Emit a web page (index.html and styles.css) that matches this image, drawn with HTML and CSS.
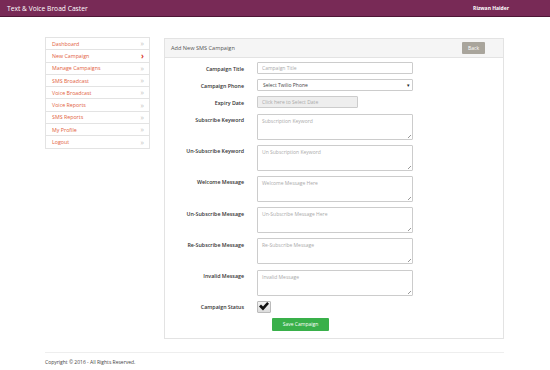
FILE: index.html
```html
<!DOCTYPE html>
<html lang="en">

<head>
    <meta charset="UTF-8">
    <meta name="viewport" content="width=device-width, initial-scale=1.0">
    <title>Text &amp; Voice Broad Caster</title>
    <link rel="stylesheet" href="styles.css">
</head>

<body>
    <div class="topbar">
        <span class="brand">Text &amp; Voice Broad Caster</span>
        <span class="user">Rizwan Haider</span>
    </div>

    <div class="wrap">
        <div class="layout">
            <ul class="sidenav">
                <li><a href="#">Dashboard</a><span class="arrow">&raquo;</span></li>
                <li class="active"><a href="#">New Campaign</a><span class="arrow">&rsaquo;</span></li>
                <li><a href="#">Manage Campaigns</a><span class="arrow">&raquo;</span></li>
                <li><a href="#">SMS Broadcast</a><span class="arrow">&raquo;</span></li>
                <li><a href="#">Voice Broadcast</a><span class="arrow">&raquo;</span></li>
                <li><a href="#">Voice Reports</a><span class="arrow">&raquo;</span></li>
                <li><a href="#">SMS Reports</a><span class="arrow">&raquo;</span></li>
                <li><a href="#">My Profile</a><span class="arrow">&raquo;</span></li>
                <li><a href="#">Logout</a><span class="arrow">&raquo;</span></li>
            </ul>

            <div class="panel">
                <div class="panel-heading">
                    <span>Add New SMS Campaign</span>
                    <button class="btn-back">Back</button>
                </div>
                <form class="panel-body">
                    <div class="row">
                        <label>Campaign Title</label>
                        <input type="text" class="field" placeholder="Campaign Title">
                    </div>
                    <div class="row">
                        <label>Campaign Phone</label>
                        <div class="field select">Select Twilio Phone<span class="caret">&#9662;</span></div>
                    </div>
                    <div class="row">
                        <label>Expiry Date</label>
                        <input type="text" class="field date" placeholder="Click here to Select Date" readonly>
                    </div>
                    <div class="row">
                        <label>Subscribe Keyword</label>
                        <textarea class="field area" placeholder="Subscription Keyword"></textarea>
                    </div>
                    <div class="row">
                        <label>Un-Subscribe Keyword</label>
                        <textarea class="field area" placeholder="Un Subscription Keyword"></textarea>
                    </div>
                    <div class="row">
                        <label>Welcome Message</label>
                        <textarea class="field area" placeholder="Welcome Message Here"></textarea>
                    </div>
                    <div class="row">
                        <label>Un-Subscribe Message</label>
                        <textarea class="field area" placeholder="Un-Subscribe Message Here"></textarea>
                    </div>
                    <div class="row">
                        <label>Re-Subscribe Message</label>
                        <textarea class="field area" placeholder="Re-Subscribe Message"></textarea>
                    </div>
                    <div class="row">
                        <label>Invalid Message</label>
                        <textarea class="field area" placeholder="Invalid Message"></textarea>
                    </div>
                    <div class="row">
                        <label>Campaign Status</label>
                        <span class="check">
                            <svg width="10" height="9" viewBox="0 0 10 9">
                                <path d="M0 4.4 L2 2.6 L4 4.6 L8.2 0 L10 1.8 L4 8.6 Z" fill="#111"/>
                            </svg>
                        </span>
                    </div>
                    <div class="row">
                        <label></label>
                        <button type="button" class="btn-save">Save Campaign</button>
                    </div>
                </form>
            </div>
        </div>

        <div class="footer">Copyright &copy; 2016 - All Rights Reserved.</div>
    </div>
</body>

</html>
```

FILE: styles.css
```css
body {
    margin: 0;
    font-family: "Open Sans", Arial, sans-serif;
    background-color: #fff;
    color: #333;
}

.topbar {
    height: 16px;
    background-color: #782a56;
    border-bottom: 1px solid #4e1636;
    display: flex;
    align-items: center;
    justify-content: space-between;
    padding: 0 41px 0 7px;
    color: #fff;
}

.brand {
    font-size: 6.7px;
}

.user {
    font-size: 5px;
    font-weight: bold;
}

.wrap {
    width: 459px;
    margin: 20px 0 0 45px;
}

.layout {
    display: flex;
    align-items: flex-start;
    gap: 14px;
}

.sidenav {
    list-style: none;
    margin: 0;
    padding: 0;
    width: 103px;
    border: 1px solid #e3e3e3;
    border-bottom: none;
    font-size: 5.3px;
    flex-shrink: 0;
}

.sidenav li {
    height: 11.3px;
    border-bottom: 1px solid #e3e3e3;
    display: flex;
    align-items: center;
    justify-content: space-between;
    padding: 0 5px 0 6px;
}

.sidenav a {
    color: #e2603c;
    text-decoration: none;
}

.sidenav .arrow {
    color: #c4c4c4;
    font-size: 7px;
}

.sidenav .active .arrow {
    color: #d9362a;
    font-weight: bold;
    font-size: 8px;
}

.panel {
    flex: 1;
    margin-top: 1px;
    border: 1px solid #e3e3e3;
}

.panel-heading {
    height: 18px;
    background-color: #f5f5f5;
    border-bottom: 1px solid #e3e3e3;
    display: flex;
    align-items: center;
    justify-content: space-between;
    padding: 0 18px 0 6px;
    font-size: 5.6px;
    color: #555;
}

.btn-back {
    width: 23px;
    height: 12px;
    padding: 0;
    border: none;
    border-radius: 1px;
    background-color: #a9a59c;
    color: #fff;
    font-family: inherit;
    font-size: 5px;
}

.panel-body {
    display: flex;
    flex-direction: column;
    gap: 5.2px;
    padding: 4px 0 7px;
    margin: 0;
}

.row {
    display: flex;
    align-items: flex-start;
    gap: 13px;
}

.row label {
    width: 79px;
    text-align: right;
    font-size: 5.3px;
    font-weight: 600;
    color: #333;
    padding-top: 2.5px;
}

.field {
    box-sizing: border-box;
    width: 156px;
    height: 12px;
    margin: 0;
    padding: 0 4px;
    border: 1px solid #ccc;
    border-radius: 1px;
    font-family: inherit;
    font-size: 5px;
    color: #555;
    background-color: #fff;
    outline: none;
}

.field::placeholder {
    color: #aaa;
}

.select {
    display: flex;
    align-items: center;
    justify-content: space-between;
    padding: 0 2px 0 5px;
    color: #444;
}

.caret {
    font-size: 5px;
    color: #222;
}

.date {
    width: 101px;
    background-color: #eee;
}

.area {
    height: 26px;
    padding: 3px 4px;
    resize: none;
    background-image: linear-gradient(135deg, transparent 45%, #999 46%, #999 54%, transparent 55%);
    background-size: 3px 3px;
    background-repeat: no-repeat;
    background-position: right 1px bottom 1px;
}

.check {
    box-sizing: border-box;
    width: 14px;
    height: 12px;
    border: 1px solid #bbb;
    border-radius: 1px;
    background: linear-gradient(#f4f4f4, #dcdcdc);
    display: flex;
    align-items: center;
    justify-content: center;
}

.btn-save {
    margin-left: 15px;
    width: 57px;
    height: 13px;
    padding: 0;
    border: none;
    border-radius: 1px;
    background-color: #39b04a;
    color: #fff;
    font-family: inherit;
    font-size: 5px;
}

.footer {
    margin-top: 13px;
    border-top: 1px solid #eee;
    padding-top: 6px;
    font-size: 5px;
    color: #444;
}
```
